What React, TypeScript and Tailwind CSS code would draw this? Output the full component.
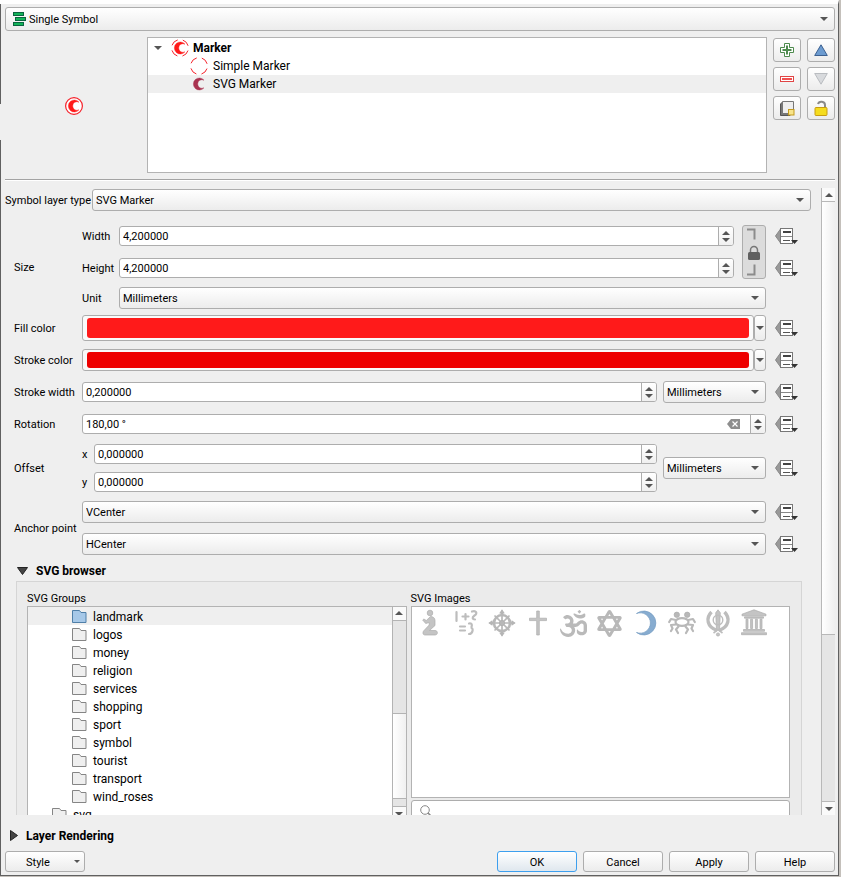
import { type ReactNode } from "react";
import { FaOm, FaStarOfDavid } from "react-icons/fa";

const frame = "border border-[#adadad] rounded-[3px]";
const raised = "border border-[#adadad] rounded-[3px] bg-linear-to-b from-white to-[#ececec]";

function Down({ className = "" }: { className?: string }) {
  return (
    <svg className={className} width="8" height="4" viewBox="0 0 8 4" aria-hidden="true">
      <path d="M0 0h8L4 4z" fill="#555" />
    </svg>
  );
}

function Up({ className = "" }: { className?: string }) {
  return (
    <svg className={className} width="8" height="4" viewBox="0 0 8 4" aria-hidden="true">
      <path d="M0 4h8L4 0z" fill="#555" />
    </svg>
  );
}

function Combo({
  id,
  value,
  label,
  className = "",
  height = "h-[22px]",
  pad = "pl-[3px]",
}: {
  id: string;
  value: string;
  label?: string;
  className?: string;
  height?: string;
  pad?: string;
}) {
  return (
    <div className={`relative min-w-0 ${className}`}>
      <select
        id={id}
        aria-label={label}
        defaultValue={value}
        className={`block w-full appearance-none pt-[2px] pr-5 text-black outline-none ${pad} ${height} ${raised}`}
      >
        <option>{value}</option>
      </select>
      <Down className="pointer-events-none absolute top-1/2 right-[7px] -translate-y-1/2" />
    </div>
  );
}

function Spin({
  id,
  value,
  label,
  className = "",
  clear = false,
}: {
  id: string;
  value: string;
  label?: string;
  className?: string;
  clear?: boolean;
}) {
  return (
    <div className={`flex h-5 min-w-0 overflow-hidden bg-white ${frame} ${className}`}>
      <input
        id={id}
        aria-label={label}
        type="text"
        defaultValue={value}
        className="w-0 min-w-0 flex-1 bg-transparent pt-[2px] pl-[3px] text-black outline-none"
      />
      {clear && (
        <button type="button" aria-label="Clear value" className="mr-[10px]">
          <svg width="13" height="10" viewBox="0 0 13 10" aria-hidden="true">
            <path d="M4 0h9v10H4L0 5z" fill="#8e8e8e" />
            <path d="M5.500 2.500l5 5M10.500 2.500l-5 5" stroke="#fff" strokeWidth="1.200" />
          </svg>
        </button>
      )}
      <div className="flex w-[15px] flex-col items-center justify-center gap-[3px] border-l border-[#adadad] bg-linear-to-b from-white to-[#f0f0f0]">
        <button type="button" aria-label="Increase">
          <Up className="block" />
        </button>
        <button type="button" aria-label="Decrease">
          <Down className="block" />
        </button>
      </div>
    </div>
  );
}

function Override() {
  return (
    <button type="button" aria-label="Data defined override" className="flex h-[22px] items-center">
      <svg width="24" height="18" viewBox="0 0 24 18" aria-hidden="true">
        <path d="M5.500 2v14L0.500 9z" fill="#999" stroke="#888" strokeWidth="1" />
        <rect x="5.500" y="1.500" width="12" height="15" fill="#fff" stroke="#777" />
        <path d="M6 9.500h11" stroke="#888" />
        <path d="M8 5h8" stroke="#444" strokeWidth="2" />
        <path d="M8 13.500h7" stroke="#555" />
        <path d="M16 13h7l-3.500 4z" fill="#333" />
      </svg>
    </button>
  );
}

function Row({
  label,
  htmlFor,
  children,
  tools = <Override />,
}: {
  label: string;
  htmlFor?: string;
  children: ReactNode;
  tools?: ReactNode;
}) {
  return (
    <div className="flex items-center pl-[9px]">
      <label htmlFor={htmlFor} className="w-[68px] shrink-0 pt-[2px] whitespace-nowrap">
        {label}
      </label>
      <div className="min-w-0 flex-1">{children}</div>
      <div className="w-[45px] shrink-0 pl-[9px]">{tools}</div>
    </div>
  );
}

function ColorRow({ id, label, height, color }: { id: string; label: string; height: string; color: string }) {
  return (
    <Row label={label} htmlFor={id}>
      <div className={`flex ${height}`}>
        <button id={id} type="button" className={`flex-1 bg-[#fafafa] px-1 py-[2px] ${frame}`}>
          <span className={`block h-full rounded-[3px] ${color}`} />
        </button>
        <button
          type="button"
          aria-label={`${label} menu`}
          className={`flex w-3 items-center justify-center ${raised}`}
        >
          <Down className="shrink-0" />
        </button>
      </div>
    </Row>
  );
}

function SymbolIcon({ ring, moon, broken }: { ring: boolean; moon?: string; broken?: boolean }) {
  return (
    <svg width="18" height="18" viewBox="0 0 18 18" aria-hidden="true" className="shrink-0">
      {ring && (
        <circle
          cx="9"
          cy="9"
          r="8.400"
          fill="#fff"
          stroke="#f5222b"
          strokeWidth={broken ? 1 : 1.2}
          strokeDasharray={broken ? "8 5.200" : undefined}
          strokeDashoffset={broken ? "-2.600" : undefined}
        />
      )}
      {moon && (
        <path d="M14 5.200A6 6 0 1 0 14 12.800A4.300 4.300 0 1 1 14 5.200z" fill={moon} stroke={moon} strokeWidth=".4" />
      )}
    </svg>
  );
}

function Folder({ active = false }: { active?: boolean }) {
  return (
    <svg width="15" height="13" viewBox="0 0 15 13" aria-hidden="true" className="shrink-0">
      <path
        d="M.5 12.500V.5h7l1.500 2h5v10z"
        fill={active ? "#a6c8e8" : "#efefef"}
        stroke={active ? "#4f7fa8" : "#858585"}
      />
    </svg>
  );
}

function ToolButton({ label, disabled, children }: { label: string; disabled?: boolean; children: ReactNode }) {
  return (
    <button
      type="button"
      aria-label={label}
      disabled={disabled}
      className={`flex h-6 w-7 items-center justify-center ${raised}`}
    >
      {children}
    </button>
  );
}

function PushButton({ children, primary = false }: { children: ReactNode; primary?: boolean }) {
  return (
    <button
      type="button"
      className={`h-[21px] w-20 rounded-[3px] border bg-linear-to-b pt-[2px] ${
        primary ? "border-[#3d9fee] from-white to-[#dfe7ee]" : "border-[#adadad] from-white to-[#ececec]"
      }`}
    >
      {children}
    </button>
  );
}

const groups = [
  "landmark",
  "logos",
  "money",
  "religion",
  "services",
  "shopping",
  "sport",
  "symbol",
  "tourist",
  "transport",
  "wind_roses",
];

function Art({ children }: { children: ReactNode }) {
  return (
    <svg width="28" height="28" viewBox="0 0 28 28" aria-hidden="true" fill="#c4c4c4" stroke="#acacac" strokeWidth=".7">
      {children}
    </svg>
  );
}

const images: { name: string; art: ReactNode }[] = [
  {
    name: "praying",
    art: (
      <Art>
        <circle cx="14" cy="4" r="2.800" />
        <path d="M14.500 7.500c2.500 0 4.500 1.500 4.500 4v5L13.500 21.500h5.500c3.200 0 3.200 4.500 0 4.500H9c-2.500 0-2.500-3-1-4.500l5.200-5.500v-2.500l-3.500 1-3-3.500 1.200-1 2.400 1.500z" />
      </Art>
    ),
  },
  {
    name: "script",
    art: (
      <Art>
        <path
          d="M4.500 3v9M10.500 7.500h6M13.500 5v5.500M20 2.500c4-1.500 6 2 2.500 4-3 2-2 4 .5 4M8 17.500h5M8 21.500h5M17 14.500c4-1 3 4 1.500 4 3.500 0 2.500 6.500-1.500 6.500"
          fill="none"
          stroke="#bdbdbd"
          strokeWidth="2.200"
          strokeLinecap="round"
        />
      </Art>
    ),
  },
  {
    name: "dharma wheel",
    art: (
      <Art>
        <g fill="none" stroke="#b8b8b8">
          <circle cx="14" cy="14" r="8" strokeWidth="2.600" />
          <path d="M14 3v22M3 14h22M6.500 6.500l15 15M21.500 6.500l-15 15" strokeWidth="1.700" />
        </g>
        <circle cx="14" cy="14" r="2.600" fill="#b8b8b8" />
        <path d="M14 .8l2.200 3.400h-4.400zM14 27.200l2.200-3.400h-4.400zM.8 14l3.400-2.200v4.400zM27.200 14l-3.400-2.200v4.400z" fill="#b8b8b8" />
      </Art>
    ),
  },
  {
    name: "cross",
    art: (
      <Art>
        <path d="M12.700 2h2.600v7.200H22.500v2.400h-7.200V26h-2.600V11.600H5.500V9.200h7.200z" />
      </Art>
    ),
  },
  { name: "om", art: <FaOm size={27} color="#bababa" /> },
  { name: "star", art: <FaStarOfDavid size={27} color="#b8b8b8" /> },
  {
    name: "crescent",
    art: (
      <Art>
        <path
          d="M4.500 4.500A12 12 0 1 1 4.500 23.500A10.200 10.200 0 1 0 4.500 4.500z"
          fill="#87acd0"
          stroke="#739bc2"
        />
      </Art>
    ),
  },
  {
    name: "figures",
    art: (
      <Art>
        <circle cx="8.800" cy="5.800" r="2.700" fill="#b8b8b8" />
        <circle cx="19.200" cy="5.800" r="2.700" fill="#b8b8b8" />
        <g fill="none" stroke="#b8b8b8" strokeWidth="2.200" strokeLinecap="round" strokeLinejoin="round">
          <ellipse cx="14" cy="13" rx="6.500" ry="3.800" />
          <path d="M8 11l-5-1-1.800 3M20 11l5-1 1.800 3M8 15.500l-5 .5 1.500 3.500-1.500 2.500M20 15.500l5 .5-1.500 3.500 1.500 2.500M10.500 17.500l-2.500 3 2 3.500M17.500 17.500l2.500 3-2 3.500" />
        </g>
      </Art>
    ),
  },
  {
    name: "khanda",
    art: (
      <Art>
        <path d="M14 .8l2.300 3-.8 17h-3l-.8-17z" />
        <g fill="none" stroke="#bdbdbd">
          <circle cx="14" cy="11" r="4.800" strokeWidth="1.400" />
          <path d="M7.500 3C1.500 9 3 18 13 21.500M20.500 3C26.500 9 25 18 15 21.500" strokeWidth="3.400" />
          <path d="M9.500 24l4.500-3.500 4.500 3.500" strokeWidth="1.600" />
        </g>
        <circle cx="14" cy="25.500" r="1.600" />
      </Art>
    ),
  },
  {
    name: "temple",
    art: (
      <Art>
        <path
          d="M14 .8L26 5.200v1.600H2V5.200zM4.500 7.800h19v1.400h-19zM6 10.200h2v9.300H6zM10.600 10.200h2v9.300h-2zM15.400 10.200h2v9.300h-2zM20 10.200h2v9.300h-2zM3.500 20.500h21v1.800h-21zM1.500 23.700h25v2h-25z"
          fill="#c4c4c4"
        />
      </Art>
    ),
  },
];

export default function App() {
  return (
    <div className="flex h-screen bg-[#c4c0bb] pr-[2px] pb-px font-['Roboto','Noto_Sans',sans-serif] text-[11px] leading-4 text-black">
      <div className="flex w-px shrink-0 flex-col bg-[#606060]">
        <div className="h-1 bg-white" />
        <div className="h-[100px]" />
        <div className="h-9 bg-[#efefef]" />
      </div>
      <main className="flex min-w-0 flex-1 flex-col border-t-4 border-r border-b border-t-white border-r-[#606060] border-b-[#606060] bg-[#efefef] pt-[3px] pr-[3px] pb-[3px] pl-1">
        <div className="relative">
          <Combo id="renderer" label="Renderer" value="Single Symbol" height="h-6" pad="pl-[23px]" />
          <svg className="pointer-events-none absolute top-1 left-[7px]" width="15" height="15" viewBox="0 0 15 15" aria-hidden="true">
            <g fill="#12b358" stroke="#0b6440">
              <rect x="1.500" y="1.500" width="10" height="3" />
              <rect x="3.500" y="6.500" width="10" height="3" />
              <rect x="1.500" y="11.500" width="10" height="3" />
            </g>
          </svg>
        </div>

        <section className="mt-[6px] flex">
          <div className="flex w-[142px] shrink-0 items-center justify-center pt-[2px] pr-1">
            <SymbolIcon ring moon="#ff1a1a" />
          </div>
          <ul className="h-[136px] min-w-0 flex-1 border border-[#b3b3b3] bg-white pt-px text-xs leading-[18px]">
            <li className="flex h-[18px] items-center pl-[6px] font-bold">
              <Down className="mr-[9px] shrink-0" />
              <SymbolIcon ring broken moon="#ff1a1a" />
              <span className="pl-1">Marker</span>
            </li>
            <li className="flex h-[18px] items-center pl-[42px]">
              <SymbolIcon ring broken />
              <span className="pl-[5px]">Simple Marker</span>
            </li>
            <li className="flex h-[18px] items-center bg-[#efefef] pl-[42px]">
              <SymbolIcon ring={false} moon="#a93350" />
              <span className="pl-[5px]">SVG Marker</span>
            </li>
          </ul>
          <div className="grid shrink-0 grid-cols-2 content-start gap-x-[6px] gap-y-[5px] pt-px pl-[6px]">
            <ToolButton label="Add symbol layer">
              <svg width="14" height="14" viewBox="0 0 14 14" aria-hidden="true">
                <path d="M4.500.5h5v4h4v5h-4v4h-5v-4h-4v-5h4z" fill="#fff" stroke="#4d8a4d" />
                <path d="M7 2.500v9M2.500 7h9" stroke="#4d8a4d" strokeWidth="2" />
              </svg>
            </ToolButton>
            <ToolButton label="Move up">
              <svg width="14" height="12" viewBox="0 0 14 12" aria-hidden="true">
                <path d="M7 .8L13.300 11.500H.7z" fill="#6c9bd0" stroke="#3c6090" />
              </svg>
            </ToolButton>
            <ToolButton label="Remove symbol layer">
              <svg width="14" height="6" viewBox="0 0 14 6" aria-hidden="true">
                <rect x=".5" y=".5" width="13" height="5" fill="#fff" stroke="#e04545" />
                <path d="M2 3h10" stroke="#f05050" strokeWidth="2" />
              </svg>
            </ToolButton>
            <ToolButton label="Move down" disabled>
              <svg width="14" height="12" viewBox="0 0 14 12" aria-hidden="true">
                <path d="M7 11.200L13.300.5H.7z" fill="#d8dadd" stroke="#b9bcc0" />
              </svg>
            </ToolButton>
            <ToolButton label="Duplicate symbol layer">
              <svg width="15" height="15" viewBox="0 0 15 15" aria-hidden="true">
                <path d="M.5 3l2-2v11l9 .5-1.500 2H.5z" fill="#777" stroke="#555" />
                <path d="M2.500.5h11v12h-11z" fill="#eee" stroke="#777" />
                <rect x="8.500" y="8.500" width="5.500" height="5.500" fill="#f8e48a" stroke="#c39a1c" />
              </svg>
            </ToolButton>
            <ToolButton label="Unlock layer color">
              <svg width="14" height="16" viewBox="0 0 14 16" aria-hidden="true">
                <path d="M4 4c1-3.500 7-3 7 1v3" fill="none" stroke="#8a8a8a" strokeWidth="2" />
                <rect x="1" y="7.500" width="12" height="8" rx="1" fill="#f5dc1e" stroke="#c79c12" />
              </svg>
            </ToolButton>
          </div>
        </section>

        <hr className="mt-[6px] h-[2px] border-t border-b border-t-[#a3a3a3] border-b-white" />

        <section className="mt-[7px] flex min-h-0 flex-1 overflow-hidden">
          <div className="min-w-0 flex-1">
            <div className="flex items-center pt-px">
              <label htmlFor="layer-type" className="w-[87px] shrink-0 pt-[2px] whitespace-nowrap">
                Symbol layer type
              </label>
              <Combo id="layer-type" value="SVG Marker" className="flex-1" />
            </div>

            <div className="mt-[14px]">
              <Row
                label="Size"
                tools={
                  <div className="flex flex-col gap-[10px] pb-[30px]">
                    <Override />
                    <Override />
                  </div>
                }
              >
                <div className="flex gap-2">
                  <div className="flex min-w-0 flex-1 flex-col gap-[10px]">
                    <div className="flex h-[22px] items-center">
                      <label htmlFor="width" className="w-[37px] pt-[2px]">Width</label>
                      <Spin id="width" value="4,200000" className="flex-1" />
                    </div>
                    <div className="flex h-[22px] items-center">
                      <label htmlFor="height" className="w-[37px] pt-[2px]">Height</label>
                      <Spin id="height" value="4,200000" className="flex-1" />
                    </div>
                  </div>
                  <button
                    type="button"
                    aria-label="Lock aspect ratio"
                    className="w-6 rounded-[3px] border border-[#adadad] bg-[#dcdcdc]"
                  >
                    <svg width="22" height="52" viewBox="0 0 22 52" aria-hidden="true">
                      <path d="M4 3.500h7.500v10M4 48.500h7.500v-10" fill="none" stroke="#8c8c8c" strokeWidth="2" />
                      <path d="M7.500 27v-3a3.500 3.500 0 0 1 7 0v3" fill="none" stroke="#777" strokeWidth="1.500" />
                      <rect x="5" y="26" width="12" height="8" rx="1.500" fill="#606060" />
                    </svg>
                  </button>
                </div>
                <div className="mt-2 flex items-center">
                  <label htmlFor="unit" className="w-[37px] pt-[2px]">Unit</label>
                  <Combo id="unit" value="Millimeters" className="flex-1" />
                </div>
              </Row>
            </div>

            <div className="mt-[6px] flex flex-col gap-2">
              <ColorRow id="fill" label="Fill color" height="h-[26px]" color="bg-[#ff1a1a]" />
              <ColorRow id="stroke" label="Stroke color" height="h-[22px]" color="bg-[#ee0000]" />
            </div>

            <div className="mt-[10px] flex flex-col gap-[10px]">
              <Row label="Stroke width" htmlFor="stroke-width">
                <div className="flex items-center gap-[6px]">
                  <Spin id="stroke-width" value="0,200000" className="flex-1" />
                  <Combo id="stroke-unit" label="Stroke width unit" value="Millimeters" className="w-[103px]" />
                </div>
              </Row>
              <Row label="Rotation" htmlFor="rotation">
                <Spin id="rotation" value="180,00 °" clear />
              </Row>
            </div>

            <div className="mt-[9px] flex flex-col gap-[9px]">
              <Row label="Offset">
                <div className="flex items-center gap-[6px]">
                  <div className="flex min-w-0 flex-1 flex-col gap-2">
                    <div className="flex h-5 items-center">
                      <label htmlFor="offset-x" className="w-3 pt-[2px]">x</label>
                      <Spin id="offset-x" value="0,000000" className="flex-1" />
                    </div>
                    <div className="flex h-5 items-center">
                      <label htmlFor="offset-y" className="w-3 pt-[2px]">y</label>
                      <Spin id="offset-y" value="0,000000" className="flex-1" />
                    </div>
                  </div>
                  <Combo id="offset-unit" label="Offset unit" value="Millimeters" className="w-[103px]" />
                </div>
              </Row>
              <Row
                label="Anchor point"
                htmlFor="anchor-v"
                tools={
                  <div className="flex flex-col gap-[10px]">
                    <Override />
                    <Override />
                  </div>
                }
              >
                <div className="flex flex-col gap-[10px]">
                  <Combo id="anchor-v" value="VCenter" />
                  <Combo id="anchor-h" label="Horizontal anchor" value="HCenter" />
                </div>
              </Row>
            </div>

            <button type="button" className="mt-2 ml-3 flex items-center gap-2 text-xs leading-4 font-bold">
              <svg width="11" height="8" viewBox="0 0 11 8" aria-hidden="true">
                <path d="M.5.5h10l-5 7z" fill="#444" stroke="#222" />
              </svg>
              SVG browser
            </button>

            <div className="mt-[2px] mr-[9px] ml-[11px] flex gap-1 border border-[#d5d5d5] bg-[#ebebeb] pt-[10px] pr-[11px] pl-[10px]">
              <div className="min-w-0 flex-1">
                <h3 className="leading-[14px]">SVG Groups</h3>
                <div className="flex h-[215px] border border-[#b3b3b3] bg-white">
                  <ul className="min-w-0 flex-1 text-xs leading-[18px]">
                    {groups.map((name, index) => (
                      <li
                        key={name}
                        className={`flex h-[18px] items-center gap-[6px] pl-11 ${index === 0 ? "bg-[#efefef]" : ""}`}
                      >
                        <Folder active={index === 0} />
                        <span className="pt-px">{name}</span>
                      </li>
                    ))}
                    <li className="flex h-[18px] items-center gap-[6px] pl-6">
                      <Folder />
                      <span className="pt-px">svg</span>
                    </li>
                  </ul>
                  <div className="flex w-[14px] flex-col border-l border-[#b3b3b3] bg-[#e5e5e5]">
                    <button type="button" aria-label="Scroll groups up" className="flex h-[14px] items-center justify-center border-b border-[#b3b3b3] bg-[#fafafa]">
                      <Up />
                    </button>
                    <div className="mt-[92px] h-[87px] border-t border-b border-[#b3b3b3] bg-linear-to-r from-white to-[#f0f0f0]" />
                    <button type="button" aria-label="Scroll groups down" className="mt-[7px] flex h-[14px] items-center justify-center border-t border-[#b3b3b3] bg-[#fafafa]">
                      <Down />
                    </button>
                  </div>
                </div>
              </div>
              <div className="min-w-0 flex-1">
                <h3 className="leading-[14px]">SVG Images</h3>
                <div className="flex h-[192px] border border-[#b3b3b3] bg-white pt-px">
                  {images.map(({ name, art }) => (
                    <button
                      key={name}
                      type="button"
                      aria-label={name}
                      className="flex h-[30px] w-9 shrink-0 items-center justify-center"
                    >
                      {art}
                    </button>
                  ))}
                </div>
                <div className={`mt-[2px] flex h-[22px] items-center gap-2 bg-white pl-2 ${frame}`}>
                  <svg width="12" height="12" viewBox="0 0 12 12" aria-hidden="true" fill="none" stroke="#888">
                    <circle cx="5" cy="5" r="4.300" />
                    <path d="M8 8l3.500 3.500" strokeWidth="1.500" />
                  </svg>
                  <input type="text" aria-label="SVG path" className="w-0 flex-1 outline-none" />
                </div>
              </div>
            </div>
          </div>

          <div className="ml-[10px] flex w-[14px] shrink-0 flex-col border-l border-[#b8b8b8] bg-[#e5e5e5]">
            <button type="button" aria-label="Scroll up" className="flex h-[14px] shrink-0 items-center justify-center border-b border-[#b8b8b8] bg-[#fafafa]">
              <Up />
            </button>
            <div className="h-[69%] border-b border-[#b8b8b8] bg-linear-to-r from-white to-[#efefef]" />
            <div className="h-0 flex-1" />
            <button type="button" aria-label="Scroll down" className="flex h-[14px] shrink-0 items-center justify-center border-t border-[#b8b8b8] bg-[#fafafa]">
              <Down />
            </button>
          </div>
        </section>

        <button type="button" className="flex h-9 items-center gap-2 pt-[5px] pl-[5px] text-xs font-bold">
          <svg width="8" height="11" viewBox="0 0 8 11" aria-hidden="true">
            <path d="M.5.5v10l7-5z" fill="#444" stroke="#222" />
          </svg>
          Layer Rendering
        </button>

        <footer className="flex gap-[6px]">
          <button type="button" className={`mr-auto flex h-[21px] w-20 items-center pr-1 pl-5 ${raised}`}>
            <span className="flex-1 pt-[2px] text-left">Style</span>
            <svg width="6" height="3" viewBox="0 0 6 3" aria-hidden="true">
              <path d="M0 0h6L3 3z" fill="#555" />
            </svg>
          </button>
          <PushButton primary>OK</PushButton>
          <PushButton>Cancel</PushButton>
          <PushButton>Apply</PushButton>
          <PushButton>Help</PushButton>
        </footer>
      </main>
    </div>
  );
}
